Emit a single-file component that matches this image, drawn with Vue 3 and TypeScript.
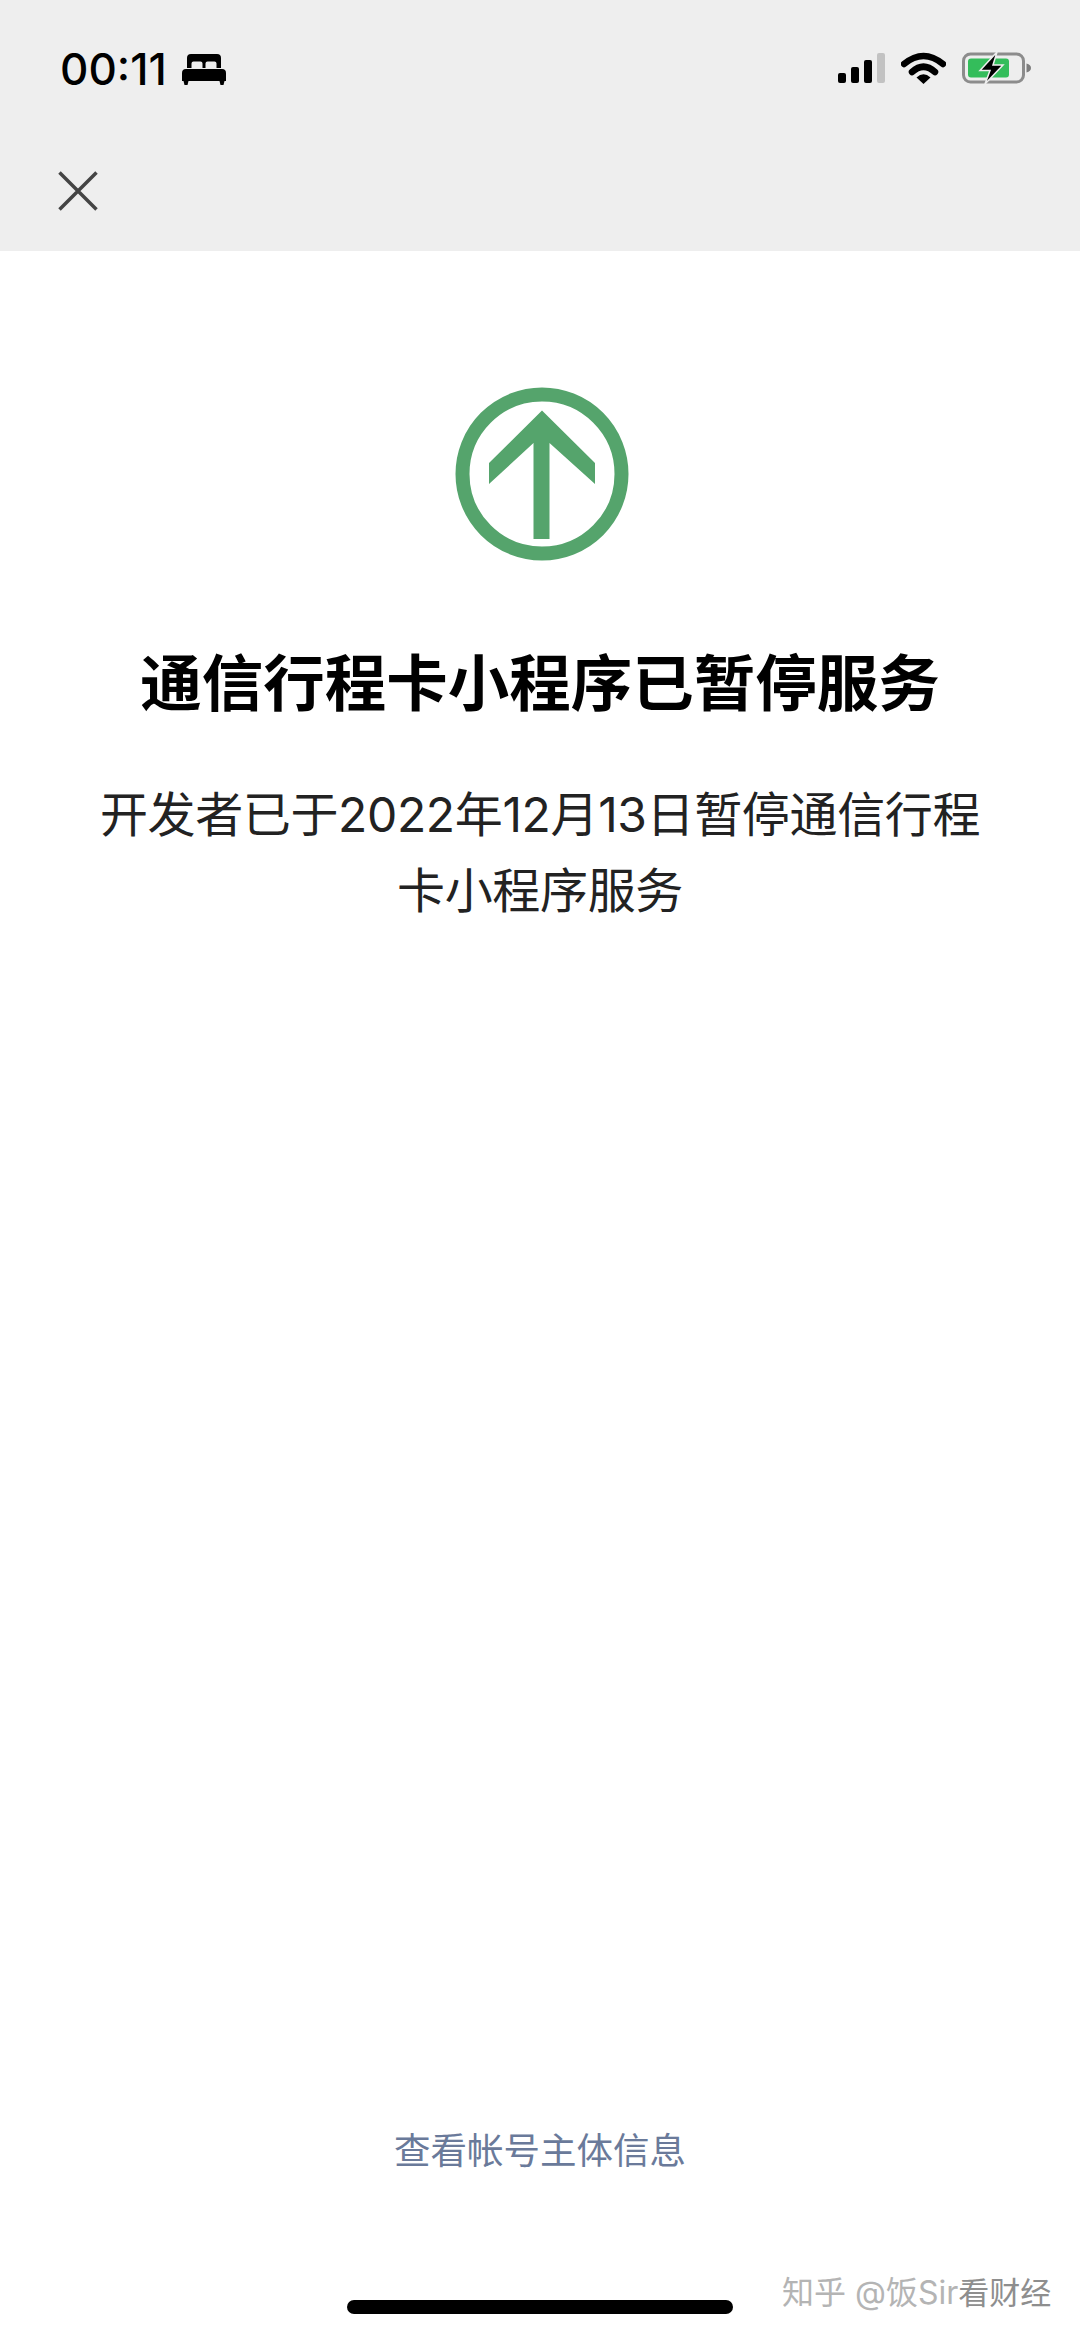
<template>
  <div class="screen">
    <header class="top">
      <div class="status-bar">
        <div class="status-left">
          <span class="time">00:11</span>
          <svg class="bed" viewBox="0 0 44 31" width="44" height="31">
            <path d="M5 14V4a4 4 0 0 1 4-4h26a4 4 0 0 1 4 4v10h-4.500V9.500a2 2 0 0 0-2-2h-7a2 2 0 0 0-2 2V14h-3V9.500a2 2 0 0 0-2-2h-7a2 2 0 0 0-2 2V14z" fill="#000" />
            <path d="M4 15h36a4 4 0 0 1 4 4v8h-1.500l-1 4h-3l-1-4H6.500l-1 4h-3l-1-4H0v-8a4 4 0 0 1 4-4z" fill="#000" />
          </svg>
        </div>
        <div class="status-right">
          <svg class="signal" viewBox="0 0 47 30" width="47" height="30">
            <rect x="0" y="20" width="8" height="10" rx="2" fill="#000" />
            <rect x="13" y="14" width="8" height="16" rx="2" fill="#000" />
            <rect x="26" y="7" width="8" height="23" rx="2" fill="#000" />
            <rect x="39" y="0" width="8" height="30" rx="2" fill="#c2c2c2" />
          </svg>
          <svg class="wifi" viewBox="0 0 45 33" width="45" height="33">
            <path d="M3 13 Q22.500 -3 42 13" fill="none" stroke="#000" stroke-width="6.500" stroke-linecap="round" />
            <path d="M11 21 Q22.500 10.500 34 21" fill="none" stroke="#000" stroke-width="6.500" stroke-linecap="round" />
            <path d="M15.500 26.500 Q22.500 20 29.500 26.500 L22.500 33z" fill="#000" />
          </svg>
          <svg class="battery" viewBox="0 0 70 32" width="70" height="32">
            <rect x="1.500" y="2" width="60" height="28" rx="7" fill="none" stroke="#8c8c8c" stroke-width="3" />
            <rect x="6" y="6.500" width="41" height="19" rx="3" fill="#34bd5b" />
            <path d="M64.500 11.500c3 .8 4.500 2.500 4.500 4.500s-1.500 3.700-4.500 4.500z" fill="#7d7d7d" />
            <path d="M35 0 L18 18.500 H28 L23 32 L41 13 H31 Z" fill="#000" stroke="#eee" stroke-width="1.500" />
          </svg>
        </div>
      </div>
      <div class="nav">
        <svg class="close" viewBox="0 0 40 40" width="40" height="40">
          <path d="M1.500 1.500 38.500 38.500M38.500 1.500 1.500 38.500" stroke="#444" stroke-width="3.500" fill="none" />
        </svg>
      </div>
    </header>

    <main class="content">
      <svg class="notice-icon" viewBox="0 0 174 174" width="174" height="174">
        <circle cx="87" cy="87" r="79.500" fill="none" stroke="#55a46c" stroke-width="14" />
        <path d="M87 23.500 140 76V97L94.500 56V152H78.500V56L34 97V76Z" fill="#55a46c" />
      </svg>
      <h1 class="title">{{ title }}</h1>
      <p class="desc">{{ description }}</p>
    </main>

    <footer class="bottom">
      <a class="account-link">{{ linkText }}</a>
      <div class="home-indicator"></div>
    </footer>

    <div class="watermark">
      <span>知乎 @饭Sir</span>
      <span class="watermark-over">看财经</span>
    </div>
  </div>
</template>

<script setup lang="ts">
const title = '通信行程卡小程序已暂停服务'
const description = '开发者已于2022年12月13日暂停通信行程卡小程序服务'
const linkText = '查看帐号主体信息'
</script>

<style>
body {
  background: #fff;
}
</style>

<style scoped>
.screen {
  position: relative;
  width: 1080px;
  height: 2337px;
  display: flex;
  flex-direction: column;
  background: #fff;
  font-family: Inter, "Noto Sans CJK SC", sans-serif;
  overflow: hidden;
}

.top {
  height: 251px;
  flex-shrink: 0;
  background: #eeeeee;
}

.status-bar {
  height: 137px;
  padding: 51px 48px 0 60px;
  box-sizing: border-box;
  display: flex;
  justify-content: space-between;
  align-items: flex-start;
}

.status-left {
  display: flex;
  align-items: center;
  gap: 15px;
}

.time {
  font-size: 44px;
  line-height: 36px;
  font-weight: 500;
  color: #000;
}

.status-right {
  display: flex;
  align-items: center;
  gap: 16px;
}

.nav {
  padding: 34px 0 0 58px;
}

.close {
  display: block;
}

.content {
  flex: 1;
  display: flex;
  flex-direction: column;
  align-items: center;
  padding-top: 136px;
}

.notice-icon {
  display: block;
  margin-left: 4px;
}

.title {
  margin: 83px 0 0;
  font-size: 61.500px;
  line-height: 80px;
  font-weight: 700;
  color: #000;
}

.desc {
  margin: 53px 0 0;
  width: 900px;
  font-size: 48px;
  line-height: 76px;
  letter-spacing: -0.360px;
  text-align: center;
  color: #222;
}

.bottom {
  flex-shrink: 0;
  display: flex;
  flex-direction: column;
  align-items: center;
  padding-bottom: 23px;
}

.account-link {
  font-size: 36.500px;
  line-height: 50px;
  color: #6a7a9a;
}

.home-indicator {
  width: 386px;
  height: 14px;
  margin-top: 124px;
  border-radius: 7px;
  background: #000;
}

.watermark {
  position: absolute;
  left: 782px;
  top: 2275px;
  font-size: 32px;
  line-height: 36px;
  color: #b4b4b4;
  white-space: nowrap;
}

.watermark-over {
  font-size: 31px;
  color: #8e8e8e;
}
</style>
